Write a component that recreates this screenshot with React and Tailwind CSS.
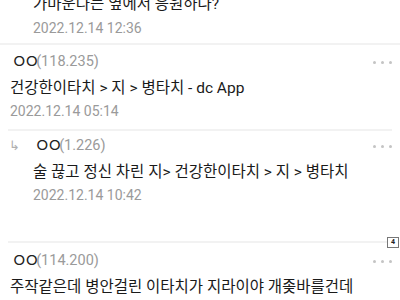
export default function App() {
  const Dots = () => (
    <div className="flex gap-[5px] items-center mr-[8px]">
      <span className="w-[3px] h-[3px] rounded-full bg-[#c4c4c4]" />
      <span className="w-[3px] h-[3px] rounded-full bg-[#c4c4c4]" />
      <span className="w-[3px] h-[3px] rounded-full bg-[#c4c4c4]" />
    </div>
  );
  const Header = ({ ip }) => (
    <div className="h-[20px] flex items-center justify-between">
      <div className="flex items-center leading-[20px]">
        <span className="text-[#222] text-[18px] tracking-[-4px] ml-[1px]">ㅇㅇ</span>
        <span className="text-[#9a9a9a] text-[14.5px]">({ip})</span>
      </div>
      <Dots />
    </div>
  );
  return (
    <div className="relative w-[400px] h-[300px] overflow-hidden bg-white font-['Roboto','Noto_Sans_CJK_KR',sans-serif]">
      <div className="flex flex-col">
        {/* cut reply */}
        <div className="pl-[33px] mt-[-7px]">
          <div className="h-[22px] text-[15.5px] leading-[22px] text-[#1a1a1a]">가마운다는 옆에서 응원하나?</div>
          <div className="mt-[3px] h-[20px] text-[14px] leading-[20px] text-[#9a9a9a]">2022.12.14 12:36</div>
        </div>
        <div className="mt-[5px] h-[2px] bg-[#f2f2f2]" />
        {/* comment 1 */}
        <div className="pl-[10px] mt-[7px]">
          <Header ip="118.235" />
          <div className="mt-[5px] h-[22px] text-[15.5px] leading-[22px] text-[#1a1a1a]">건강한이타치 &gt; 지 &gt; 병타치 - dc App</div>
          <div className="mt-[2px] h-[20px] text-[14px] leading-[20px] text-[#9a9a9a]">2022.12.14 05:14</div>
        </div>
        <div className="mt-[8px] mx-[8px] h-[2px] bg-[#f2f2f2]" />
        {/* reply */}
        <div className="mt-[5px] flex">
          <div className="w-[33px] pl-[9px] h-[20px] text-[13px] leading-[20px] text-[#b0b0b0]">↳</div>
          <div className="flex-1">
            <Header ip="1.226" />
            <div className="mt-[5px] h-[22px] text-[15.5px] leading-[22px] text-[#1a1a1a]">술 끊고 정신 차린 지&gt; 건강한이타치 &gt; 지 &gt; 병타치</div>
            <div className="mt-[2px] h-[20px] text-[14px] leading-[20px] text-[#9a9a9a]">2022.12.14 10:42</div>
          </div>
        </div>
        <div className="mt-[36px] mx-[8px] h-[2px] bg-[#f2f2f2]" />
        {/* comment 3 */}
        <div className="pl-[10px] mt-[8px]">
          <Header ip="114.200" />
          <div className="mt-[5px] h-[22px] text-[15.5px] leading-[22px] text-[#1a1a1a]">주작같은데 병안걸린 이타치가 지라이야 개좆바를건데</div>
        </div>
      </div>
      <div className="absolute left-[387px] top-[237px] w-[12px] h-[11px] border border-[#777] bg-white flex items-center justify-center text-[7px] leading-none font-bold text-[#222]">4</div>
    </div>
  );
}
